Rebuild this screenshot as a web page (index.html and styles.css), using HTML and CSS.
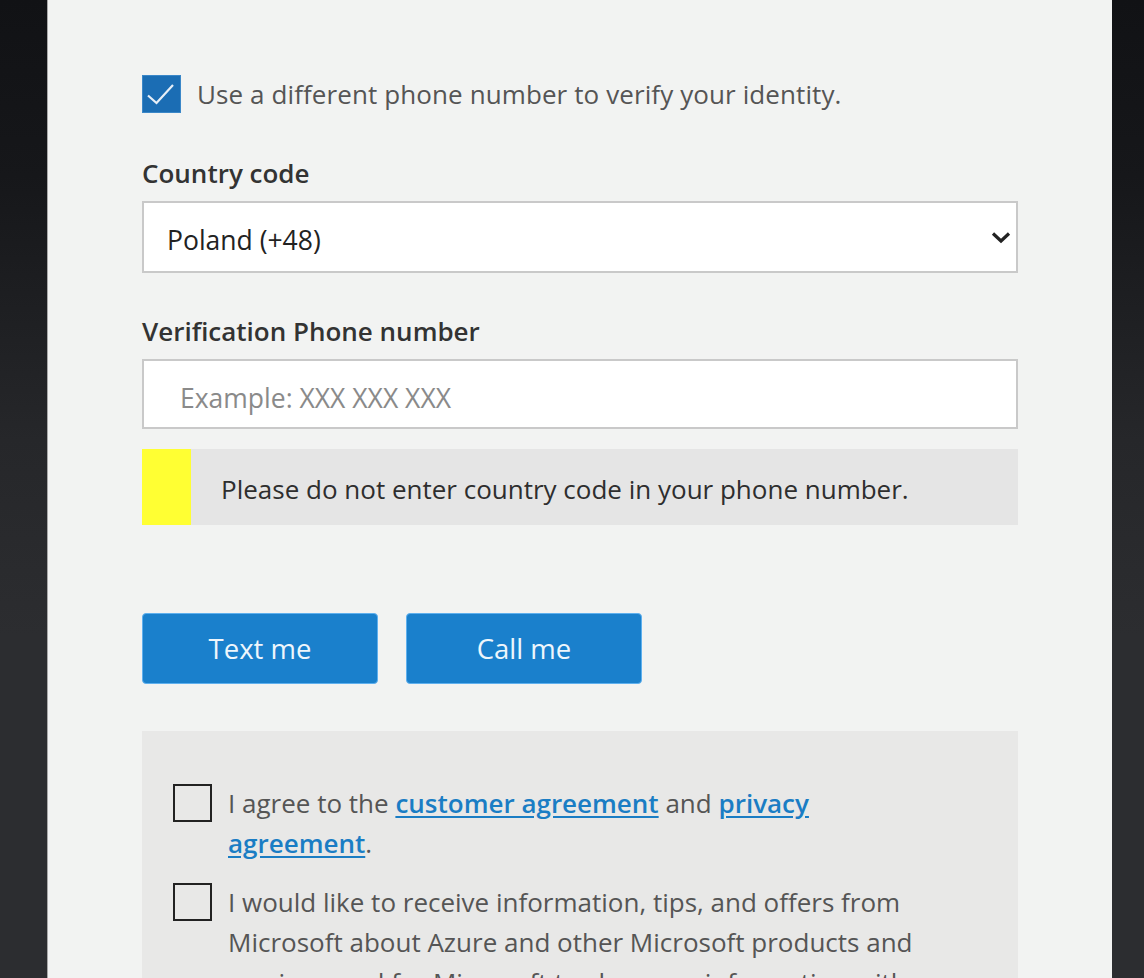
FILE: index.html
```html
<!DOCTYPE html>
<html lang="en">
<head>
<meta charset="utf-8">
<title>Verify identity</title>
<link rel="stylesheet" href="styles.css">
</head>
<body>
<div class="panel">
  <div class="check-row">
    <span class="box box-checked">
      <svg width="39" height="39" viewBox="0 0 39 39"><path d="M6 20.5 L14.5 28 L31 10" fill="none" stroke="#e6eef7" stroke-width="2.2"/></svg>
    </span>
    <span class="check-label">Use a different phone number to verify your identity.</span>
  </div>

  <div class="field-label first">Country code</div>
  <div class="select">
    <span class="select-value">Poland (+48)</span>
    <svg class="chevron" width="22" height="14" viewBox="0 0 22 14"><path d="M3 3.5 L11 11 L19 3.5" fill="none" stroke="#222" stroke-width="3.2"/></svg>
  </div>

  <div class="field-label">Verification Phone number</div>
  <input class="text-input" type="text" placeholder="Example: XXX XXX XXX">

  <div class="notice">
    <span class="notice-bar"></span>
    <span class="notice-text">Please do not enter country code in your phone number.</span>
  </div>

  <div class="buttons">
    <button class="btn">Text me</button>
    <button class="btn">Call me</button>
  </div>

  <div class="agree">
    <div class="agree-row">
      <span class="box"></span>
      <p class="agree-text"><span>I agree to the </span><a href="#">customer agreement</a><span> and </span><a href="#"><span>privacy</span> <span>agreement</span></a>.</p>
    </div>
    <div class="agree-row">
      <span class="box"></span>
      <p class="agree-text">I would like to receive information, tips, and offers from Microsoft about Azure and other Microsoft products and services, and for Microsoft to share my information with select partners so I can get relevant information about their products and services.</p>
    </div>
  </div>
</div>
</body>
</html>
```

FILE: styles.css
```css
html, body {
  margin: 0;
  padding: 0;
  height: 978px;
  overflow: hidden;
}
body {
  background: linear-gradient(180deg, #111215 0%, #16171a 18%, #26272a 45%, #2c2d30 65%, #2c2d30 100%);
  font-family: "Open Sans", "Noto Sans", sans-serif;
}
.panel {
  margin-left: 47px;
  width: 1065px;
  box-sizing: border-box;
  min-height: 1100px;
  background: #f2f3f2;
  border-left: 1px solid #a8a8a8;
  padding: 75px 0 0 94px;
}
.check-row {
  display: flex;
  align-items: center;
  gap: 16px;
  height: 38px;
}
.box {
  flex: 0 0 auto;
  width: 39px;
  height: 38px;
  box-sizing: border-box;
  border: 2px solid #222;
  display: block;
}
.box-checked {
  background: #1b6db4;
  border: 1px solid #3b87c8;
}
.box-checked svg { display: block; margin: -1px; }
.check-label {
  font-size: 26px;
  color: #555;
  letter-spacing: 0.1px;
}
.field-label {
  font-size: 26px;
  line-height: 32px;
  font-weight: 600;
  color: #333;
  margin: 42px 0 12px;
}
.field-label.first { margin-top: 44px; }
.select {
  width: 876px;
  height: 72px;
  box-sizing: border-box;
  border: 2px solid #c9c9c9;
  background: #fff;
  display: flex;
  align-items: center;
  justify-content: space-between;
  padding: 0 4px 0 23px;
}
.select-value {
  font-size: 26.5px;
  color: #222;
  padding-top: 5px;
}
.chevron { display: block; }
.text-input {
  display: block;
  width: 876px;
  height: 70px;
  box-sizing: border-box;
  border: 2px solid #c9c9c9;
  background: #fff;
  padding: 7px 0 0 36px;
  font-family: inherit;
  font-size: 26.5px;
  outline: none;
  margin: 0;
}
.text-input::placeholder { color: #8a8a8a; }
.notice {
  margin-top: 20px;
  width: 876px;
  height: 76px;
  display: flex;
  align-items: center;
  background: #e5e5e5;
}
.notice-bar {
  align-self: stretch;
  width: 49px;
  background: #ffff33;
}
.notice-text {
  margin-left: 30px;
  padding-top: 4px;
  font-size: 26px;
  color: #2e2e2e;
}
.buttons {
  display: flex;
  gap: 28px;
  margin-top: 88px;
}
.btn {
  width: 236px;
  height: 71px;
  border: 1px solid #5fb0ee;
  border-radius: 4px;
  background: #1a80cc;
  color: #eef6fc;
  font-family: inherit;
  font-size: 27.5px;
  padding: 0;
}
.agree {
  margin-top: 47px;
  width: 876px;
  box-sizing: border-box;
  background: #e8e8e7;
  padding: 52px 30px 40px 31px;
  display: flex;
  flex-direction: column;
  gap: 19px;
}
.agree-row {
  display: flex;
  gap: 16px;
  align-items: flex-start;
}
.agree-row .box { margin-top: 1px; }
.agree-text {
  margin: 0;
  max-width: 712px;
  font-size: 26px;
  line-height: 40px;
  color: #555;
}
.agree-text a {
  color: #1a7dc4;
  font-weight: 600;
  text-decoration: underline;
  text-underline-offset: 3px;
}
```
